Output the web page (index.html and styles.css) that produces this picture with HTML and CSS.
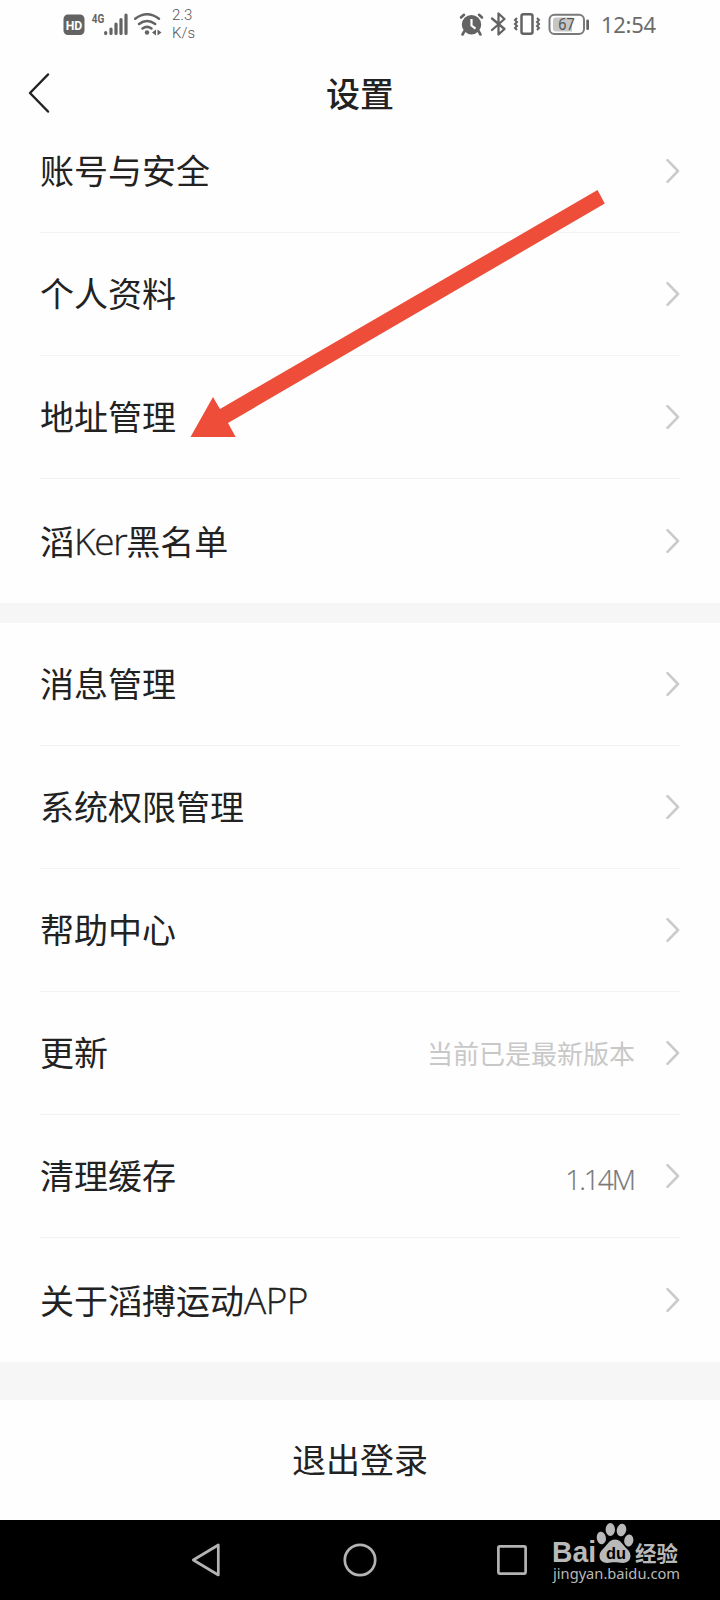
FILE: index.html
```html
<!DOCTYPE html>
<html lang="zh-CN">
<head>
<meta charset="utf-8">
<title>设置</title>
<link rel="stylesheet" href="styles.css">
</head>
<body>
<svg class="defs" width="0" height="0"><symbol id="chev" viewBox="0 0 14 24"><path d="M1.5 1.2 12 12 1.5 22.8" fill="none" stroke="#cbcbcb" stroke-width="2.6" stroke-linecap="round" stroke-linejoin="round"/></symbol></svg>
<main class="screen">
  <div class="status">
    <svg class="status-left" width="108" height="34" viewBox="60 6 108 34">
      <rect x="63.500" y="14.500" width="21" height="20.500" rx="4.500" fill="#636363"/>
      <text class="hd" x="65.700" y="29.800" textLength="16.600" lengthAdjust="spacingAndGlyphs">HD</text>
      <text class="net" x="91.800" y="22.500" textLength="12.500" lengthAdjust="spacingAndGlyphs">4G</text>
      <g stroke="#636363" stroke-width="3.200" stroke-linecap="round">
        <path d="M105.700 32.500v1M111 29v4.500M116 24v9.500M121 19.500v14M126 15v18.500"/>
      </g>
      <g fill="none" stroke="#636363" stroke-width="2.500" stroke-linecap="round">
        <path d="M135.200 18.700q11.800-9 23.800 0M139 24q8-6 16.200 0M142.500 28.500q4.500-3.300 9 0"/>
      </g>
      <circle cx="147" cy="32.500" r="2.200" fill="#636363"/>
      <path d="M156 29.500v6l-4-3zM157.500 29.500v6l4-3z" fill="#636363"/>
    </svg>
    <div class="speed"><span>2.3</span><span>K/s</span></div>
    <svg class="status-right" width="134" height="34" viewBox="458 6 134 34">
      <g fill="#636363"><circle cx="471.500" cy="24.700" r="9.700"/><path d="m464.500 31-2 3.500M478.500 31l2 3.500M461 17.500l3-2.700M482 17.500l-3-2.700" stroke="#636363" stroke-width="2.600" stroke-linecap="round"/></g>
      <path d="M471.500 19v6.500l4 3.200" fill="none" stroke="#fff" stroke-width="2.200"/>
      <path d="M492 18.500 504.500 29l-6 5.500v-21l6 5.500L492 30" fill="none" stroke="#636363" stroke-width="2.300" stroke-linejoin="round" stroke-linecap="round"/>
      <rect x="521.500" y="14.300" width="11" height="19.400" rx="2" fill="none" stroke="#636363" stroke-width="2.500"/>
      <path d="m517 18-2 2 2 2-2 2 2 2-2 2 2 2M537 18l2 2-2 2 2 2-2 2 2 2-2 2" fill="none" stroke="#636363" stroke-width="2"/>
      <rect x="549.500" y="14.800" width="34.500" height="19.200" rx="5" fill="none" stroke="#7a7a7a" stroke-width="2"/>
      <path d="M556 17.500h16v14h-16q-3 0-3-3v-8q0-3 3-3z" fill="#c6c6c6"/>
      <rect x="586.300" y="19.500" width="2.700" height="10.500" rx="1.200" fill="#636363"/>
      <text class="pct" x="558.300" y="30" textLength="16.500" lengthAdjust="spacingAndGlyphs">67</text>
    </svg>
    <span class="clock">12:54</span>
  </div>
  <header class="bar">
    <svg class="back" width="24" height="42" viewBox="0 0 24 42"><path d="M21 2.500 3 21l18 18.500" fill="none" stroke="#222" stroke-width="2.500" stroke-linecap="round" stroke-linejoin="round"/></svg>
    <h1 class="title">设置</h1>
  </header>
  <section class="group">
    <div class="row first"><span class="label">账号与安全</span><svg class="chev"><use href="#chev"/></svg></div>
    <div class="row"><span class="label">个人资料</span><svg class="chev"><use href="#chev"/></svg></div>
    <div class="row"><span class="label">地址管理</span><svg class="chev"><use href="#chev"/></svg></div>
    <div class="row last"><span class="label">滔<span class="latin ker">Ker</span>黑名单</span><svg class="chev"><use href="#chev"/></svg></div>
  </section>
  <section class="group second">
    <div class="row"><span class="label">消息管理</span><svg class="chev"><use href="#chev"/></svg></div>
    <div class="row"><span class="label">系统权限管理</span><svg class="chev"><use href="#chev"/></svg></div>
    <div class="row"><span class="label">帮助中心</span><svg class="chev"><use href="#chev"/></svg></div>
    <div class="row"><span class="label">更新</span><span class="note">当前已是最新版本</span><svg class="chev"><use href="#chev"/></svg></div>
    <div class="row"><span class="label">清理缓存</span><span class="size">1.14M</span><svg class="chev"><use href="#chev"/></svg></div>
    <div class="row last"><span class="label">关于滔搏运动<span class="latin app">APP</span></span><svg class="chev"><use href="#chev"/></svg></div>
  </section>
  <button class="logout">退出登录</button>
  <nav class="nav">
    <svg width="30" height="36" viewBox="0 0 30 36"><path d="M27.300 3v30L2.300 18z" fill="none" stroke="#b3b3b3" stroke-width="2.700" stroke-linejoin="round"/></svg>
    <svg width="34" height="34" viewBox="0 0 34 34"><circle cx="17" cy="17" r="15.200" fill="none" stroke="#b3b3b3" stroke-width="2.700"/></svg>
    <svg width="30" height="30" viewBox="0 0 30 30"><rect x="1.400" y="1.400" width="27.200" height="27.200" rx="1.500" fill="none" stroke="#b3b3b3" stroke-width="2.700"/></svg>
  </nav>
  <svg class="pointer" width="430" height="256" viewBox="185 185 430 256"><path d="M597.500 190 604.800 203.500 228 423 235.700 437H190.500L213 397 220 409z" fill="#ed4d39"/></svg>
  <svg class="mark" width="140" height="70" viewBox="548 1516 140 70">
    <g fill="#b9b9b9">
      <text class="m-bai" x="552" y="1562" textLength="44" lengthAdjust="spacingAndGlyphs">Bai</text>
      <ellipse cx="601.300" cy="1538" rx="4.600" ry="6.300" transform="rotate(-10 601.300 1538)"/>
      <ellipse cx="610.300" cy="1529.500" rx="4.700" ry="6.500"/>
      <ellipse cx="621.500" cy="1530" rx="4.700" ry="6.300" transform="rotate(12 621.500 1530)"/>
      <ellipse cx="628.800" cy="1540.500" rx="4.600" ry="6" transform="rotate(10 628.800 1540.500)"/>
      <path d="M615 1539.500c6 0 8 6 12 9.500 6 5 4 14-4 14-4 0-5-.7-8-.7s-5 .7-8 .7c-8 0-10-9-4-14 4-3.500 6-9.500 12-9.500z"/>
      <text class="m-cn" x="635" y="1560.500" textLength="43" lengthAdjust="spacingAndGlyphs">经验</text>
      <text class="m-url" x="553" y="1578.500" textLength="127" lengthAdjust="spacingAndGlyphs">jingyan.baidu.com</text>
    </g>
    <text class="m-du" x="606" y="1559" textLength="20" lengthAdjust="spacingAndGlyphs">du</text>
  </svg>
</main>
</body>
</html>
```
FILE: styles.css
```css
* { box-sizing: border-box; }
body { margin: 0; background: #fff; font-family: "Noto Sans CJK SC", sans-serif; color: #222; }
.defs { position: absolute; }
.screen { position: relative; width: 720px; height: 1600px; overflow: hidden; display: flex; flex-direction: column; background: #fefefe; }
.status { height: 50px; padding: 6px 0 0 60px; display: flex; align-items: flex-start; color: #636363; }
.status svg { flex: none; }
.hd { font: bold 13px Roboto, sans-serif; fill: #fff; }
.net { font: bold 12.5px Roboto, sans-serif; fill: #636363; }
.pct { font: 15.5px "Noto Sans", sans-serif; fill: #555; }
.speed { width: 40px; margin-left: 4px; display: flex; flex-direction: column; font: 300 15px/18px Roboto, sans-serif; color: #555; }
.status-right { margin-left: 246px; }
.clock { font: 22px/36px "Noto Sans", sans-serif; margin-left: 9px; letter-spacing: -.3px; color: #6c6c6c; }
.bar { height: 86px; padding: 22px 27px 0; display: grid; grid-template-columns: 40px 1fr 40px; }
.title { margin: -4px 0 0; font-size: 34px; line-height: 50px; font-weight: 500; text-align: center; }
.row { height: 123px; margin: 0 40px; display: flex; align-items: center; border-bottom: 1px solid #f3f3f3; }
.first { height: 97px; padding-bottom: 26px; }
.last { height: 124px; border: 0; }
.label { flex: 1; margin-top: -2px; font-size: 34px; line-height: 50px; white-space: nowrap; }
.last .label { margin-top: 0; }
.latin { font-family: "Open Sans", sans-serif; font-weight: 300; font-size: 37px; line-height: 40px; -webkit-text-stroke: .3px #222; }
.ker { letter-spacing: -1.3px; }
.app { letter-spacing: -.5px; }
.chev { width: 14px; height: 24px; flex: none; }
.note { font-size: 26px; line-height: 38px; color: #c8c8c8; margin-right: 31px; }
.size { font: 300 28px/38px "Open Sans", sans-serif; letter-spacing: -2px; color: #777; margin: 5px 32px 0 0; -webkit-text-stroke: .2px #777; }
.group.second { border-top: 20px solid #f6f6f6; border-bottom: 38px solid #f6f6f6; }
.logout { height: 120px; border: 0; padding: 0 0 2px; background: #fefefe; font: 34px/50px "Noto Sans CJK SC", sans-serif; color: #222; }
.nav { height: 80px; background: #000; padding-left: 191px; display: flex; align-items: center; }
.nav svg:nth-child(2) { margin-left: 122px; }
.nav svg:nth-child(3) { margin-left: 120px; }
.pointer { position: absolute; left: 185px; top: 185px; }
.mark { position: absolute; left: 548px; top: 1516px; }
.m-bai { font: bold 30px "Liberation Sans", sans-serif; }
.m-cn { font: bold 21px "Noto Sans CJK SC", sans-serif; }
.m-url { font: 15px "Noto Sans", sans-serif; }
.m-du { font: bold 17px "Liberation Sans", sans-serif; fill: #000; }
```
